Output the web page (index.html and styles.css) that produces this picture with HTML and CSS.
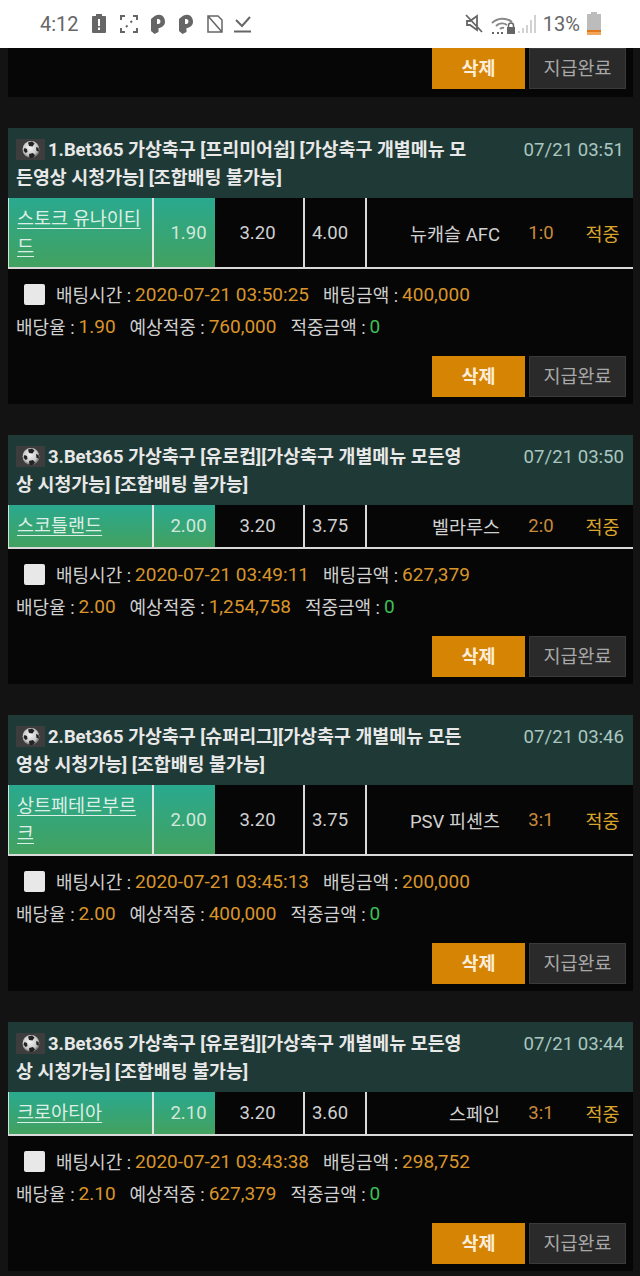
FILE: index.html
```html
<!DOCTYPE html>
<html lang="ko">
<head>
    <meta charset="UTF-8">
    <meta name="viewport" content="width=device-width, initial-scale=1.0">
    <title>배팅내역</title>
    <link rel="stylesheet" href="styles.css">
</head>
<body>
    <svg class="defs" width="0" height="0">
        <defs>
            <radialGradient id="ballShade" cx="45%" cy="40%" r="60%">
                <stop offset="0%" stop-color="#f4f4f4"/>
                <stop offset="70%" stop-color="#c8c8c8"/>
                <stop offset="100%" stop-color="#6a6a6a"/>
            </radialGradient>
            <symbol id="ball" viewBox="0 0 29 21">
                <rect width="29" height="21" fill="#3d3d3d"/>
                <circle cx="15" cy="10.500" r="8.500" fill="url(#ballShade)"/>
                <path d="M12 3.500l4-1 2.500 2-2 3-3.500-.5zM8.500 9l2.500 1 .5 3-2 1-2-2.500zM13 15l4-1 2 2.500-2.500 2.500h-3zM20 8l2.500 1 .5 3.500-2.500-.5z" fill="#222"/>
            </symbol>
            <symbol id="letter-p" viewBox="0 0 14 20">
                <path d="M0 5Q6-1 11 1.500 14 3.500 14 8 14 12 8.500 14H7.500V18L3.500 20 0 17ZM6 5V10H7.500Q9.500 9.500 9.500 7.500 9.500 5 7.500 5Z" fill="#666" fill-rule="evenodd"/>
            </symbol>
        </defs>
    </svg>

    <div class="status-bar">
        <span class="clock">4:12</span>
        <svg class="ic ic-alert" viewBox="0 0 14 19"><path d="M4 0h6v2h3a1 1 0 0 1 1 1v15a1 1 0 0 1-1 1H1a1 1 0 0 1-1-1V3a1 1 0 0 1 1-1h3z" fill="#666"/><path d="M6 5h2v7H6zM6 13.500h2v2.500H6z" fill="#fff"/></svg>
        <svg class="ic ic-focus" viewBox="0 0 18 18"><path d="M1 5V1h4M13 1h4v4M17 13v4h-4M5 17H1v-4M6 12l1.500-1.500M10.500 7.500L12 6" fill="none" stroke="#666" stroke-width="2"/></svg>
        <svg class="ic ic-p" viewBox="0 0 14 20"><use href="#letter-p"/></svg>
        <svg class="ic ic-p2" viewBox="0 0 14 20"><use href="#letter-p"/></svg>
        <svg class="ic ic-nosim" viewBox="0 0 16 18"><path d="M1 1l14 16M5 1h6l4 4v12H1V1z" fill="none" stroke="#666" stroke-width="1.500"/></svg>
        <svg class="ic ic-check" viewBox="0 0 17 18"><path d="M2 5l6 6 8-9M0 16.500h17" fill="none" stroke="#666" stroke-width="2"/></svg>
        <span class="spacer"></span>
        <svg class="ic ic-mute" viewBox="0 0 18 19"><path d="M1 1l16 17M2 7h3l7-5v14l-7-5H2z" fill="none" stroke="#666" stroke-width="1.800"/></svg>
        <svg class="ic ic-wifi" viewBox="0 0 24 20"><path d="M1 9a15 15 0 0 1 20-1M5 12a9 9 0 0 1 11-1M9 15a4 4 0 0 1 4-1" fill="none" stroke="#888" stroke-width="2"/><path d="M16 13h8v7h-8z" fill="#666"/><path d="M17.500 13v-1.500a2.500 2.500 0 0 1 5 0V13" fill="none" stroke="#666" stroke-width="1.500"/><path d="M1 18h2v2H1zM6 18h2v2H6zM10 18h2v2h-2z" fill="#666"/></svg>
        <svg class="ic ic-signal" viewBox="0 0 18 20"><path d="M1 19v-2M5 19v-5M9 19v-8M13 19V6M17 19V1" stroke="#c4c4c4" stroke-width="1.500"/></svg>
        <span class="battery-text">13%</span>
        <svg class="ic ic-battery" viewBox="0 0 14 23"><path d="M4 0h6v2h4v21H0V2h4z" fill="#bcbcbc"/><path d="M0 18h14v5H0z" fill="#f2a65a"/><path d="M0 18h14v2H0z" fill="#e2781c"/></svg>
    </div>

    <div class="card card-cut">
        <div class="actions">
            <button class="btn btn-delete">삭제</button>
            <button class="btn btn-paid">지급완료</button>
        </div>
    </div>

    <div class="card">
        <div class="card-head">
            <div class="title"><svg class="ball"><use href="#ball"/></svg>1.Bet365 가상축구 [프리미어쉽] [가상축구 개별메뉴 모든영상 시청가능] [조합배팅 불가능]</div>
            <div class="date">07/21 03:51</div>
        </div>
        <div class="match tall">
            <div class="cell team"><span>스토크 유나이티드</span></div>
            <div class="cell odd picked">1.90</div>
            <div class="cell draw">3.20</div>
            <div class="cell odd lose">4.00</div>
            <div class="cell away">뉴캐슬 AFC</div>
            <div class="cell score">1:0</div>
            <div class="cell result">적중</div>
        </div>
        <div class="info">
            <div class="line"><span class="check"></span><span class="lbl">배팅시간 :</span> <span class="val">2020-07-21 03:50:25</span><span class="lbl sep">배팅금액 :</span> <span class="val">400,000</span></div>
            <div class="line"><span class="lbl">배당율 :</span> <span class="val">1.90</span><span class="lbl sep">예상적중 :</span> <span class="val">760,000</span><span class="lbl sep">적중금액 :</span> <span class="win">0</span></div>
        </div>
        <div class="actions">
            <button class="btn btn-delete">삭제</button>
            <button class="btn btn-paid">지급완료</button>
        </div>
    </div>

    <div class="card">
        <div class="card-head">
            <div class="title"><svg class="ball"><use href="#ball"/></svg>3.Bet365 가상축구 [유로컵][가상축구 개별메뉴 모든영상 시청가능] [조합배팅 불가능]</div>
            <div class="date">07/21 03:50</div>
        </div>
        <div class="match">
            <div class="cell team"><span>스코틀랜드</span></div>
            <div class="cell odd picked">2.00</div>
            <div class="cell draw">3.20</div>
            <div class="cell odd lose">3.75</div>
            <div class="cell away">벨라루스</div>
            <div class="cell score">2:0</div>
            <div class="cell result">적중</div>
        </div>
        <div class="info">
            <div class="line"><span class="check"></span><span class="lbl">배팅시간 :</span> <span class="val">2020-07-21 03:49:11</span><span class="lbl sep">배팅금액 :</span> <span class="val">627,379</span></div>
            <div class="line"><span class="lbl">배당율 :</span> <span class="val">2.00</span><span class="lbl sep">예상적중 :</span> <span class="val">1,254,758</span><span class="lbl sep">적중금액 :</span> <span class="win">0</span></div>
        </div>
        <div class="actions">
            <button class="btn btn-delete">삭제</button>
            <button class="btn btn-paid">지급완료</button>
        </div>
    </div>

    <div class="card">
        <div class="card-head">
            <div class="title"><svg class="ball"><use href="#ball"/></svg>2.Bet365 가상축구 [슈퍼리그][가상축구 개별메뉴 모든영상 시청가능] [조합배팅 불가능]</div>
            <div class="date">07/21 03:46</div>
        </div>
        <div class="match tall">
            <div class="cell team"><span>상트페테르부르크</span></div>
            <div class="cell odd picked">2.00</div>
            <div class="cell draw">3.20</div>
            <div class="cell odd lose">3.75</div>
            <div class="cell away">PSV 피셴츠</div>
            <div class="cell score">3:1</div>
            <div class="cell result">적중</div>
        </div>
        <div class="info">
            <div class="line"><span class="check"></span><span class="lbl">배팅시간 :</span> <span class="val">2020-07-21 03:45:13</span><span class="lbl sep">배팅금액 :</span> <span class="val">200,000</span></div>
            <div class="line"><span class="lbl">배당율 :</span> <span class="val">2.00</span><span class="lbl sep">예상적중 :</span> <span class="val">400,000</span><span class="lbl sep">적중금액 :</span> <span class="win">0</span></div>
        </div>
        <div class="actions">
            <button class="btn btn-delete">삭제</button>
            <button class="btn btn-paid">지급완료</button>
        </div>
    </div>

    <div class="card">
        <div class="card-head">
            <div class="title"><svg class="ball"><use href="#ball"/></svg>3.Bet365 가상축구 [유로컵][가상축구 개별메뉴 모든영상 시청가능] [조합배팅 불가능]</div>
            <div class="date">07/21 03:44</div>
        </div>
        <div class="match">
            <div class="cell team"><span>크로아티아</span></div>
            <div class="cell odd picked">2.10</div>
            <div class="cell draw">3.20</div>
            <div class="cell odd lose">3.60</div>
            <div class="cell away">스페인</div>
            <div class="cell score">3:1</div>
            <div class="cell result">적중</div>
        </div>
        <div class="info">
            <div class="line"><span class="check"></span><span class="lbl">배팅시간 :</span> <span class="val">2020-07-21 03:43:38</span><span class="lbl sep">배팅금액 :</span> <span class="val">298,752</span></div>
            <div class="line"><span class="lbl">배당율 :</span> <span class="val">2.10</span><span class="lbl sep">예상적중 :</span> <span class="val">627,379</span><span class="lbl sep">적중금액 :</span> <span class="win">0</span></div>
        </div>
        <div class="actions">
            <button class="btn btn-delete">삭제</button>
            <button class="btn btn-paid">지급완료</button>
        </div>
    </div>
</body>
</html>
```

FILE: styles.css
```css
* {
    box-sizing: border-box;
}
html, body {
    margin: 0;
    padding: 0;
}
body {
    width: 640px;
    height: 1276px;
    overflow: hidden;
    background-color: #131313;
    font-family: Roboto, "Noto Sans CJK KR", sans-serif;
    color: #d8d8d8;
}
.defs {
    display: block;
    height: 0;
}
.status-bar {
    display: flex;
    align-items: center;
    height: 48px;
    padding: 0 39px 1px 40px;
    background: #fff;
    color: #666;
}
.clock {
    font-size: 20px;
    width: 52px;
}
.ic {
    display: block;
    flex: none;
}
.ic-alert { width: 14px; height: 19px; }
.ic-focus { width: 18px; height: 18px; margin-left: 14px; }
.ic-p { width: 14px; height: 20px; margin-left: 13px; }
.ic-p2 { width: 14px; height: 20px; margin-left: 14px; }
.ic-nosim { width: 16px; height: 18px; margin-left: 14px; }
.ic-check { width: 17px; height: 18px; margin-left: 11px; }
.ic-mute { width: 18px; height: 19px; }
.ic-wifi { width: 24px; height: 20px; margin-left: 8px; }
.ic-signal { width: 18px; height: 20px; margin-left: 3px; }
.ic-battery { width: 14px; height: 23px; margin-left: 7px; }
.spacer {
    flex: 1;
}
.battery-text {
    font-size: 20px;
    margin-left: 7px;
}
.card {
    margin: 0 7px 31px 8px;
    background: #060606;
}
.card-cut .actions {
    padding-bottom: 8px;
}
.card-head {
    display: flex;
    justify-content: space-between;
    height: 70px;
    padding: 8px 9px 0 8px;
    background: #1f3a36;
}
.title {
    width: 456px;
    font-size: 18.400px;
    font-weight: 700;
    line-height: 28px;
    color: #e8e8e8;
}
.ball {
    width: 29px;
    height: 21px;
    margin-right: 3px;
    vertical-align: -4px;
}
.date {
    font-size: 18.600px;
    line-height: 28px;
    color: #a9c6c0;
}
.match {
    display: flex;
    height: 44px;
    border-bottom: 2px solid #d9d9d9;
    font-size: 18.500px;
    color: #d0d0d0;
}
.match.tall {
    height: 71px;
}
.cell {
    display: flex;
    align-items: center;
    justify-content: center;
    flex: none;
}
.team {
    justify-content: flex-start;
    width: 146px;
    padding: 0 8px;
    line-height: 28px;
    background: linear-gradient(#2aa98f, #42a15f);
    border-left: 1px solid #cfe5dc;
    border-right: 2px solid #e4e4e4;
    color: #dcefe6;
}
.team span {
    text-decoration: underline;
    text-decoration-thickness: 1px;
    text-underline-offset: 3px;
}
.odd {
    width: 61px;
}
.odd.picked {
    padding-left: 8px;
    background: linear-gradient(#2aa98f, #42a15f);
    color: #d2e8dd;
}
.draw {
    width: 90px;
    padding-right: 3px;
    border-right: 2px solid #d9d9d9;
}
.odd.lose {
    width: 62px;
    padding-right: 10px;
    border-right: 2px solid #d9d9d9;
}
.away {
    justify-content: flex-end;
    width: 143px;
    padding-right: 10px;
}
.score {
    width: 62px;
    color: #c98a3a;
}
.result {
    width: 61px;
    color: #dba52a;
}
.info {
    padding: 9px 0 0 8px;
    margin-bottom: 14px;
    font-size: 18px;
}
.line {
    display: flex;
    align-items: center;
    height: 32px;
    white-space: pre;
}
.check {
    width: 21px;
    height: 21px;
    margin: 0 11px 0 8px;
    border-radius: 2px;
    background: #e8e8e8;
}
.lbl {
    color: #d0d0d0;
}
.sep {
    margin-left: 14px;
}
.val {
    margin-left: 4px;
    font-size: 19px;
    color: #d9952a;
}
.win {
    margin-left: 4px;
    font-size: 19px;
    color: #3fbf55;
}
.actions {
    display: flex;
    justify-content: flex-end;
    gap: 4px;
    padding: 0 7px 7px 0;
}
.btn {
    height: 41px;
    padding: 0 0 3px;
    border: none;
    font-family: Roboto, "Noto Sans CJK KR", sans-serif;
    font-size: 18.500px;
}
.btn-delete {
    width: 93px;
    background-color: #d68404;
    color: #fbeed8;
    font-weight: 700;
}
.btn-paid {
    width: 97px;
    background-color: #2a2a2a;
    border: 1px solid #3a3a3a;
    color: #a8a8a8;
}
```
